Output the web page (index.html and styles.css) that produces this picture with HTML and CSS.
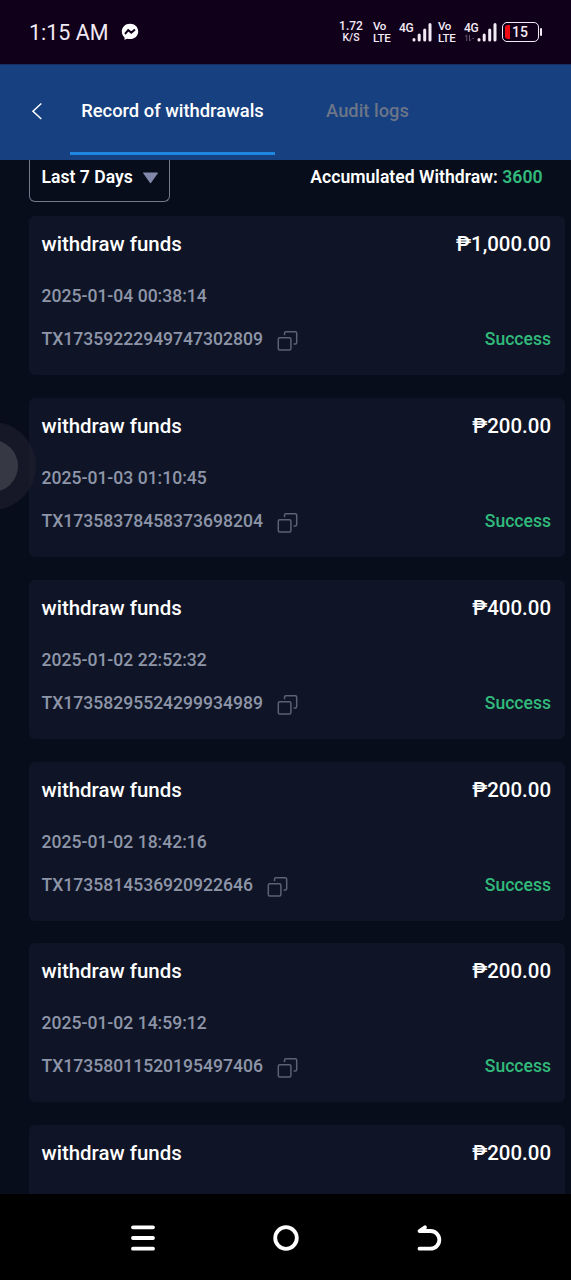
FILE: index.html
```html
<!DOCTYPE html>
<html lang="en">
<head>
<meta charset="utf-8">
<title>Record of withdrawals</title>
<link rel="stylesheet" href="styles.css">
</head>
<body>
<svg class="defs" width="0" height="0" aria-hidden="true">
  <symbol id="copy" viewBox="0 0 22 22">
    <path d="M7.5 5.2V3.2Q7.5 1.7 9 1.7H18.2Q19.7 1.7 19.7 3.2V12.4Q19.7 13.9 18.2 13.9H16.6"/>
    <rect x="1.3" y="7.7" width="12.6" height="12.4" rx="1.5"/>
  </symbol>
  <symbol id="signal" viewBox="0 0 20 20">
    <path d="M2 17.5V18M7.2 13V18M12.7 8V18M18 2.5V18"/>
  </symbol>
</svg>
<div class="screen">
  <div class="status">
    <span class="clock">1:15 AM</span>
    <svg class="messenger" viewBox="0 0 18 18"><path class="bubble" d="M9 .8C4.200.8.8 4.200.8 8.500c0 2.500 1.100 4.400 2.700 5.800v2.500l2.700-1.100c.9.300 1.800.4 2.800.4 4.800 0 8.200-3.300 8.200-7.600S13.800.8 9 .8z"/><path class="bolt" d="M4 11 7.200 7.200 10.300 9.600 14 6.500"/></svg>
    <div class="indicators">
      <div class="duo speed"><span>1.72</span><span class="unit">K/S</span></div>
      <div class="duo volte"><span>Vo</span><span>LTE</span></div>
      <div class="net"><span>4G</span><svg class="signal"><use href="#signal"/></svg></div>
      <div class="duo volte second"><span>Vo</span><span>LTE</span></div>
      <div class="net"><span>4G</span><svg class="updown" viewBox="0 0 10 8"><path d="M1 2.500 2.800 1V7M5.500 1V7L7 5.500M8.500 4.500H10"/></svg><svg class="signal"><use href="#signal"/></svg></div>
      <div class="battery"><i></i><span>15</span></div>
    </div>
  </div>
  <header class="tabs">
    <svg class="back" viewBox="0 0 12 18"><path d="M10.300 1.500 2 9.200 10.300 17"/></svg>
    <div class="tab active"><span>Record of withdrawals</span></div>
    <div class="tab"><span>Audit logs</span></div>
  </header>
  <main class="content">
    <div class="filter">
      <div class="period"><span>Last 7 Days</span><svg viewBox="0 0 16 11"><path d="M1.500.8h13L8 9.900z"/></svg></div>
      <div class="total"><span>Accumulated Withdraw: <b>3600</b></span></div>
    </div>
    <div class="list">
      <article class="card"><div class="row head"><span class="name">withdraw funds</span><span class="amount">₱1,000.00</span></div><div class="date"><span>2025-01-04 00:38:14</span></div><div class="row foot"><span class="tx">TX17359222949747302809</span><svg class="copy"><use href="#copy"/></svg><span class="state">Success</span></div></article>
      <article class="card"><div class="row head"><span class="name">withdraw funds</span><span class="amount">₱200.00</span></div><div class="date"><span>2025-01-03 01:10:45</span></div><div class="row foot"><span class="tx">TX17358378458373698204</span><svg class="copy"><use href="#copy"/></svg><span class="state">Success</span></div></article>
      <article class="card"><div class="row head"><span class="name">withdraw funds</span><span class="amount">₱400.00</span></div><div class="date"><span>2025-01-02 22:52:32</span></div><div class="row foot"><span class="tx">TX17358295524299934989</span><svg class="copy"><use href="#copy"/></svg><span class="state">Success</span></div></article>
      <article class="card"><div class="row head"><span class="name">withdraw funds</span><span class="amount">₱200.00</span></div><div class="date"><span>2025-01-02 18:42:16</span></div><div class="row foot"><span class="tx">TX1735814536920922646</span><svg class="copy"><use href="#copy"/></svg><span class="state">Success</span></div></article>
      <article class="card"><div class="row head"><span class="name">withdraw funds</span><span class="amount">₱200.00</span></div><div class="date"><span>2025-01-02 14:59:12</span></div><div class="row foot"><span class="tx">TX17358011520195497406</span><svg class="copy"><use href="#copy"/></svg><span class="state">Success</span></div></article>
      <article class="card"><div class="row head"><span class="name">withdraw funds</span><span class="amount">₱200.00</span></div></article>
    </div>
  </main>
  <nav class="navbar">
    <svg viewBox="0 0 28 28"><path d="M4 3.300H24M4 14H24M4 24.700H24"/></svg>
    <svg viewBox="0 0 28 28"><circle cx="14" cy="14" r="10.800"/></svg>
    <svg viewBox="0 0 28 28"><path d="M10 3.300 4.500 7H15.500A8.850 8.850 0 0 1 15.500 24.700H4.500"/></svg>
  </nav>
  <div class="assist"></div>
</div>
</body>
</html>
```
FILE: styles.css
```css
* { box-sizing: border-box; }
body { margin: 0; background: #070d1b; font-family: Roboto, "Noto Sans", sans-serif; font-weight: 500; color: #fff; }
.defs { position: absolute; }
.screen { position: relative; width: 571px; height: 1280px; display: flex; flex-direction: column; overflow: hidden; }
span { white-space: nowrap; }

.status { height: 64px; flex: none; background: #11001a; display: flex; align-items: center; padding: 0 32px 0 29px; color: #f2eaf5; }
.clock { font-size: 21.500px; font-weight: 400; line-height: 26px; width: 92px; padding-top: 1px; }
.messenger { width: 18px; height: 18px; }
.bubble { fill: #fff; }
.bolt { fill: none; stroke: #11001a; stroke-width: 2; }
.indicators { margin-left: auto; display: flex; align-items: center; height: 24px; }
.duo { display: flex; flex-direction: column; align-items: center; font-size: 12px; line-height: 11px; }
.speed { width: 25px; margin-right: 9px; padding-right: 1px; }
.speed .unit { font-size: 10.500px; }
.volte { width: 18px; align-items: flex-start; margin-right: 8px; font-size: 11.500px; line-height: 12px; letter-spacing: -.3px; }
.second { margin-left: 5px; margin-right: 8px; }
.net { position: relative; width: 34px; height: 22px; font-size: 12px; line-height: 14px; letter-spacing: -.3px; }
.signal { position: absolute; left: 13px; top: 1px; width: 20px; height: 20px; fill: none; stroke: #f2eaf5; stroke-width: 3; stroke-linecap: round; }
.updown { position: absolute; left: 0; top: 13px; width: 10px; height: 8px; fill: none; stroke: #62566a; }
.battery { position: relative; margin-left: 4px; width: 37px; height: 20px; border: 1.500px solid #f2eaf5; border-radius: 5px; display: flex; align-items: center; padding-left: 2px; font-size: 14px; line-height: 16px; }
.battery i { width: 5px; height: 14px; border-radius: 3px 0 0 3px; background: #f00a12; margin-right: 2px; }
.battery::after { content: ""; position: absolute; right: -4px; top: 5px; width: 2px; height: 8px; border-radius: 1px; background: #f2eaf5; }

.tabs { height: 96px; flex: none; background: #164080; border-top: 1px solid #18305f; display: flex; padding-left: 31px; }
.back { width: 12px; height: 18px; margin: 37px 27px 0 0; fill: none; stroke: #fff; stroke-width: 1.500; }
.tab { width: 205px; height: 90px; display: flex; justify-content: center; padding-top: 34px; font-size: 18.350px; line-height: 24px; color: #6c7588; }
.tab + .tab { width: 185px; }
.active { color: #fff; border-bottom: 3px solid #1e86e0; }

.content { flex: 1; min-height: 0; overflow: hidden; padding-left: 28.500px; }
.filter { display: flex; height: 56px; }
.period { width: 141px; height: 42px; border: 1.500px solid #747b8d; border-top: 0; border-radius: 0 0 6px 6px; padding: 5px 0 0 12px; display: flex; font-size: 17.600px; font-weight: 600; line-height: 25px; }
.period svg { width: 17px; height: 12px; margin: 7px 0 0 9px; fill: #8288aa; stroke: #8288aa; stroke-linejoin: round; }
.total { margin-left: auto; padding: 5px 28.500px 0 0; font-size: 17.600px; font-weight: 600; line-height: 24px; }
.total b { color: #31ba7b; font-weight: 600; }
.list { display: flex; flex-direction: column; gap: 22.850px; }
.card { flex: none; width: 536px; height: 159px; border-radius: 6px; background: #0f1526; padding: 15px 13.500px 0 13px; }
.row { display: flex; }
.head { font-size: 20.450px; line-height: 26px; }
.amount, .state { margin-left: auto; }
.date { margin-top: 27px; font-size: 17.570px; line-height: 24px; color: #8e95a8; }
.foot { margin-top: 19px; font-size: 17.570px; line-height: 24px; color: #8e95a8; }
.copy { width: 22px; height: 22px; margin: 3px 0 0 14px; fill: none; stroke: #5d6273; stroke-width: 1.500; }
.state { color: #31ba7b; }

.navbar { height: 86px; flex: none; background: #000; display: flex; justify-content: space-between; align-items: center; padding: 1px 128px 0 129px; }
.navbar svg { width: 28px; height: 28px; fill: none; stroke: #fff; stroke-width: 3.800; stroke-linecap: round; stroke-linejoin: round; }
.assist { position: absolute; left: -52px; top: 422px; width: 88px; height: 88px; border-radius: 50%; background: rgba(29,29,44,.72); }
.assist::after { content: ""; position: absolute; left: 18px; top: 18px; width: 52px; height: 52px; border-radius: 50%; background: #363844; }
```
